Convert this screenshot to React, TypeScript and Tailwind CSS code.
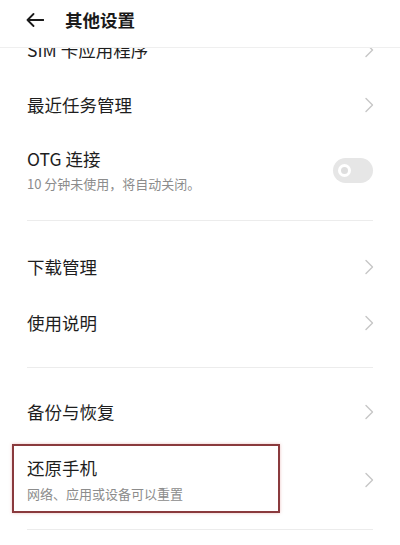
import React from 'react';

const font = { fontFamily: '"Noto Sans CJK SC", "Noto Sans", sans-serif' };

const Chevron = () => (
  <svg width="10" height="16" viewBox="0 0 10 16" fill="none" className="shrink-0">
    <path d="M2 1.5 L8.5 8 L2 14.5" stroke="#c6c6c6" strokeWidth="1.4" strokeLinecap="round" strokeLinejoin="round" />
  </svg>
);

const Divider = ({ className = 'pt-[15px] pb-[18px]' }: { className?: string }) => (
  <div className={`px-[27px] ${className}`}>
    <div className="h-px bg-[#ececec]" />
  </div>
);

const Row = ({ title, className = '' }: { title: string; className?: string }) => (
  <div className={`flex h-14 items-center justify-between pl-[27px] pr-[26px] ${className}`}>
    <span className="text-[17.5px] leading-6 text-[#1e1e1e]">{title}</span>
    <Chevron />
  </div>
);

export default function App() {
  return (
    <div className="flex h-[545px] w-[400px] flex-col overflow-hidden bg-white" style={font}>
      {/* Header */}
      <header className="relative z-10 flex h-12 shrink-0 items-center gap-[21px] border-b border-[#efefef] bg-white pb-2 pl-[26px]">
        <svg width="18" height="14" viewBox="0 0 18 14" fill="none">
          <path d="M17.5 7H1.5 M7.5 1 L1.5 7 L7.5 13" stroke="#1a1a1a" strokeWidth="1.8" strokeLinecap="round" strokeLinejoin="round" />
        </svg>
        <h1 className="text-[17.5px] font-bold leading-6 text-[#1a1a1a]">其他设置</h1>
      </header>

      {/* List */}
      <div className="flex-1 overflow-hidden">
        <div className="-mt-[26px]">
          <Row title="SIM 卡应用程序" className="h-[55px]" />
          <Row title="最近任务管理" />

          <div className="flex items-center justify-between pl-[27px] pr-[27px] pt-[14px] pb-[11px]">
            <div className="flex flex-col">
              <span className="text-[17.5px] leading-6 text-[#1e1e1e]">OTG 连接</span>
              <span className="mt-[3px] text-[13px] leading-5 text-[#8c8c8c]">10 分钟未使用，将自动关闭。</span>
            </div>
            <div className="flex h-[25px] w-10 items-center rounded-full bg-[#e6e6e6]">
              <div className="ml-[5px] h-[13px] w-[13px] rounded-full border-[3px] border-white bg-[#dedede]" />
            </div>
          </div>

          <Divider />
          <Row title="下载管理" />
          <Row title="使用说明" />
          <Divider className="pt-[16px] pb-[16px]" />
          <Row title="备份与恢复" />

          <div className="relative flex items-center justify-between pl-[27px] pr-[26px] pt-4 pb-[12px]">
            <div className="flex flex-col">
              <span className="text-[17.5px] leading-6 text-[#1e1e1e]">还原手机</span>
              <span className="mt-1 text-[13px] leading-5 text-[#8c8c8c]">网络、应用或设备可以重置</span>
            </div>
            <Chevron />
            {/* highlight annotation */}
            <div className="absolute left-3 top-[4px] h-[69px] w-[268px] border-2 border-[#8a3a3d] shadow-[0_0_3px_rgba(200,80,80,0.35)]" />
          </div>

          <Divider className="pt-[13px] pb-4" />
        </div>
      </div>
    </div>
  );
}
